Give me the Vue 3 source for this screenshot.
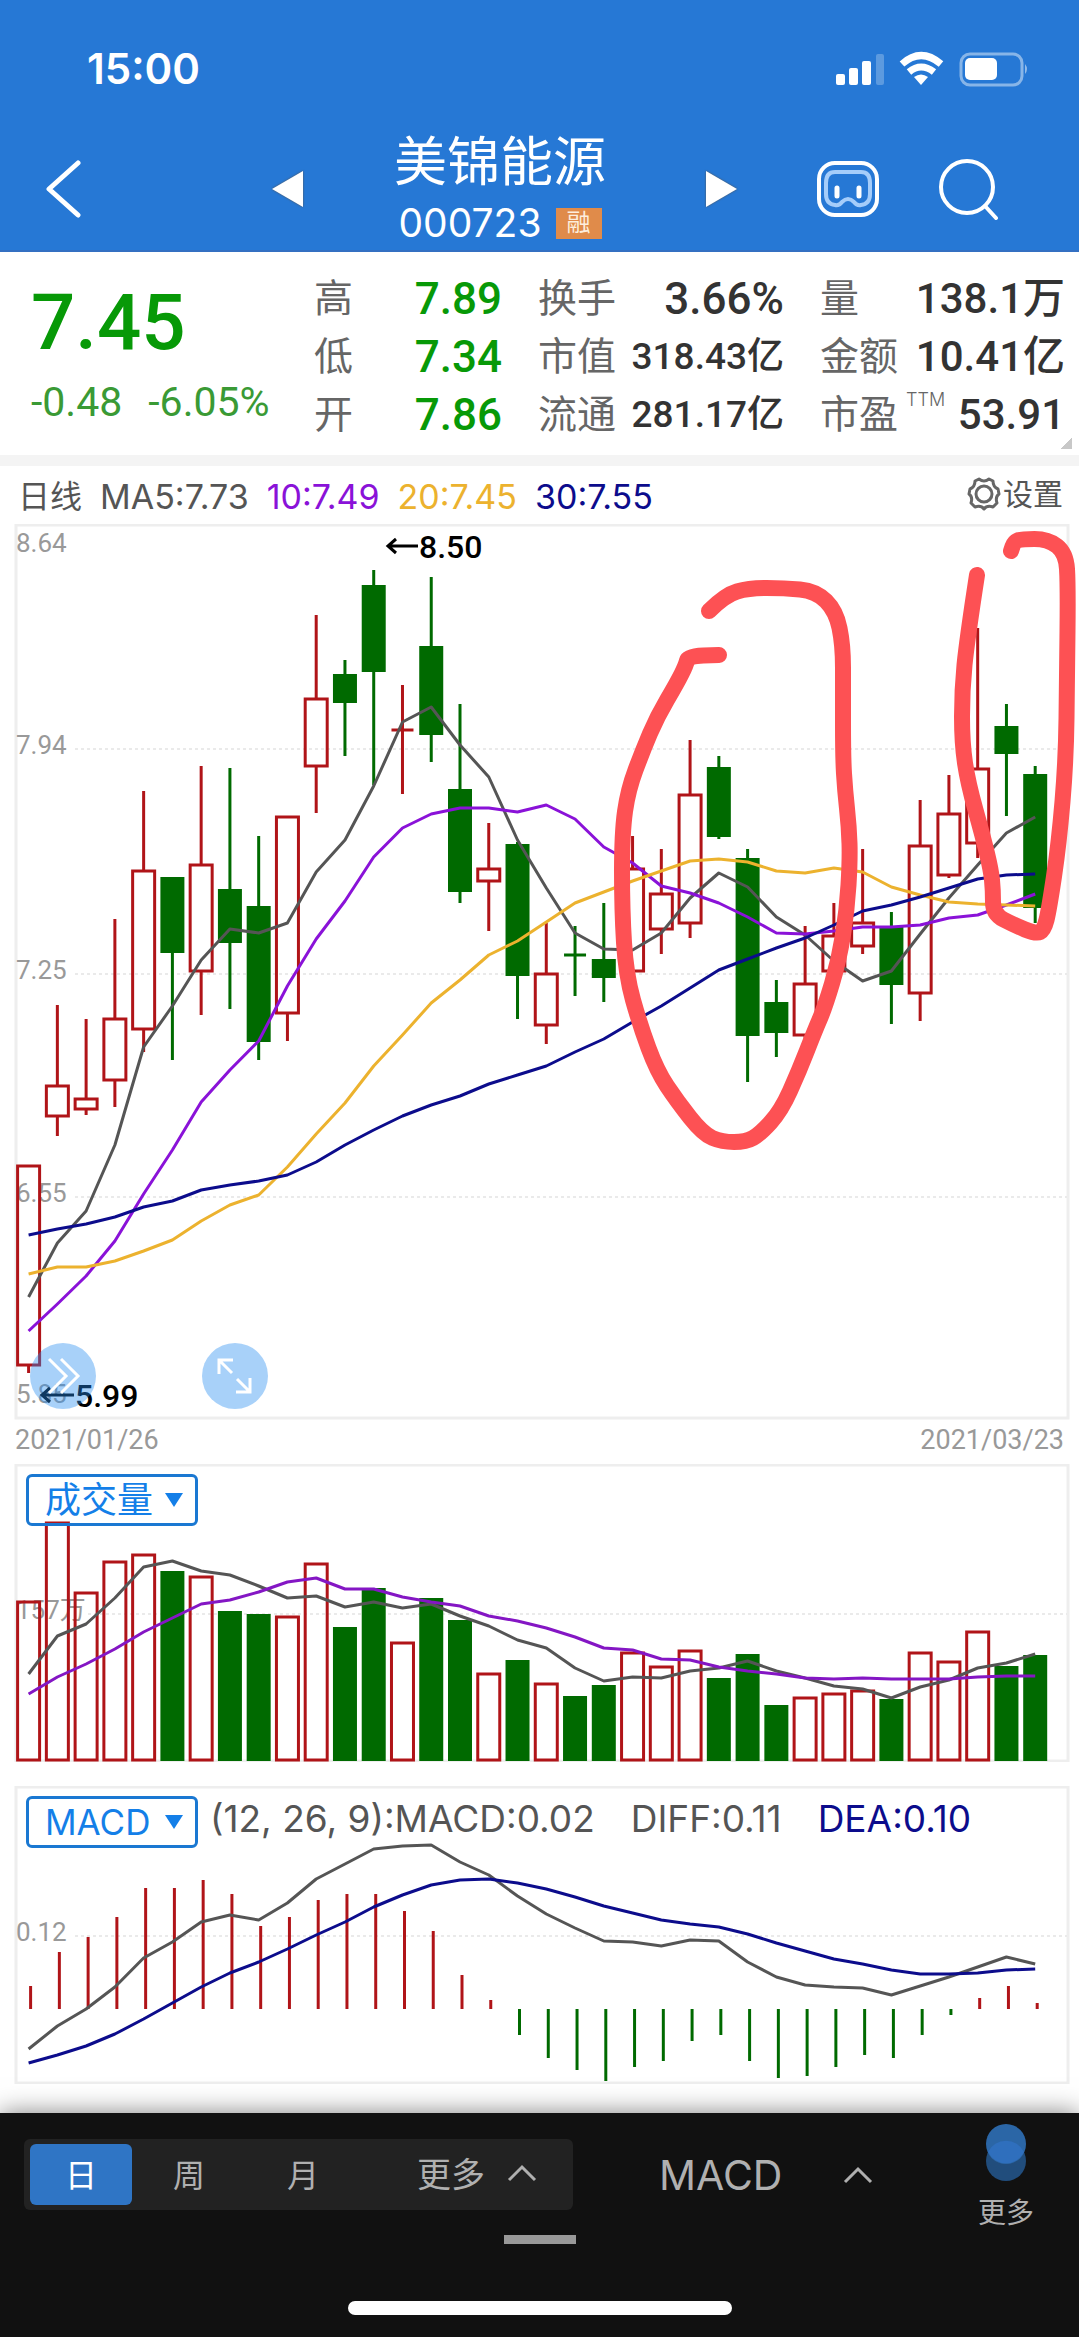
<script setup>
const STEP = 28.76
const xAt = (i) => 28.6 + STEP * i
const toPoints = (ys) => ys.map((y, i) => `${xAt(i).toFixed(1)},${y}`).join(' ')

// kind, high, body top, body bottom, low
const candles = [
  ['r', 1166, 1166, 1365, 1373], ['r', 1005, 1086, 1116, 1136], ['r', 1019, 1099, 1109, 1115],
  ['r', 919, 1019, 1080, 1107], ['r', 791, 871, 1029, 1052], ['g', 877, 877, 953, 1060],
  ['r', 766, 865, 971, 1015], ['g', 768, 889, 943, 1009], ['g', 836, 906, 1042, 1060],
  ['r', 817, 817, 1013, 1041], ['r', 615, 699, 766, 813], ['g', 660, 674, 703, 756],
  ['g', 570, 585, 672, 785], ['r', 685, 730, 730, 794], ['g', 577, 646, 735, 762],
  ['g', 704, 789, 892, 903], ['r', 823, 869, 881, 931], ['g', 842, 844, 976, 1019],
  ['r', 923, 974, 1025, 1044], ['g', 926, 955, 955, 996], ['g', 903, 959, 978, 1002],
  ['r', 836, 869, 971, 971], ['r', 849, 894, 929, 954], ['r', 740, 795, 923, 938],
  ['g', 756, 767, 837, 839], ['g', 849, 858, 1036, 1082], ['g', 980, 1002, 1033, 1057],
  ['r', 926, 984, 1035, 1043], ['r', 903, 936, 971, 971], ['r', 849, 923, 946, 954],
  ['g', 912, 926, 985, 1024], ['r', 800, 846, 993, 1021], ['r', 775, 814, 875, 878],
  ['r', 628, 769, 843, 858], ['g', 704, 726, 754, 816], ['g', 766, 774, 908, 923],
].map(([kind, high, top, bottom, low], i) => ({ kind, high, top, bottom, low, x: xAt(i) }))

const averages = [
  { color: '#555555', ys: [1297, 1243, 1211, 1145, 1047, 1006, 960, 929, 933, 923, 872, 840, 786, 722, 707, 745, 777, 840, 888, 933, 949, 950, 933, 898, 873, 887, 917, 935, 961, 981, 971, 934, 898, 865, 833, 817] },
  { color: '#8a12d8', ys: [1331, 1304, 1276, 1241, 1194, 1150, 1102, 1070, 1041, 986, 939, 901, 857, 828, 814, 808, 808, 812, 805, 819, 847, 863, 886, 893, 903, 917, 933, 934, 931, 927, 927, 925, 918, 915, 905, 894] },
  { color: '#ecb22e', ys: [1274, 1267, 1267, 1261, 1251, 1240, 1221, 1205, 1195, 1167, 1134, 1103, 1066, 1035, 1003, 980, 955, 941, 922, 903, 892, 881, 871, 861, 859, 862, 871, 873, 868, 872, 887, 895, 902, 904, 905, 906] },
  { color: '#0c0c8c', ys: [1235, 1229, 1224, 1217, 1207, 1201, 1190, 1185, 1181, 1175, 1162, 1145, 1130, 1116, 1105, 1096, 1084, 1075, 1066, 1052, 1039, 1022, 1006, 988, 970, 959, 948, 938, 925, 911, 905, 897, 888, 879, 875, 874] },
]

const volumeTops = [1602, 1523, 1593, 1562, 1555, 1571, 1577, 1611, 1614, 1617, 1564, 1627, 1588, 1643, 1598, 1620, 1674, 1660, 1684, 1696, 1685, 1653, 1667, 1651, 1678, 1654, 1705, 1698, 1694, 1691, 1699, 1653, 1662, 1632, 1666, 1655]
const volumes = volumeTops.map((top, i) => ({ top, x: xAt(i), kind: candles[i].kind }))
const volumeLines = [
  { color: '#555555', ys: [1674, 1636, 1624, 1598, 1567, 1561, 1571, 1575, 1586, 1598, 1596, 1607, 1602, 1608, 1604, 1616, 1626, 1640, 1648, 1668, 1681, 1677, 1678, 1671, 1668, 1661, 1671, 1678, 1686, 1689, 1698, 1687, 1680, 1668, 1663, 1654] },
  { color: '#8416c4', ys: [1694, 1677, 1664, 1649, 1632, 1618, 1604, 1600, 1592, 1582, 1578, 1589, 1589, 1597, 1602, 1606, 1616, 1621, 1628, 1637, 1648, 1650, 1659, 1660, 1667, 1671, 1674, 1678, 1679, 1678, 1679, 1679, 1679, 1677, 1676, 1676] },
]

const MACD_ZERO = 2009
const macdEnds = [1986, 1952, 1937, 1917, 1888, 1888, 1880, 1894, 1926, 1917, 1900, 1894, 1894, 1911, 1931, 1975, 2000, 2035, 2058, 2070, 2081, 2067, 2061, 2041, 2035, 2061, 2078, 2076, 2067, 2055, 2058, 2035, 2015, 1998, 1986, 2003]
const macdBars = macdEnds.map((end, i) => ({ end, x: xAt(i) + 2, kind: end < MACD_ZERO ? 'r' : 'g' }))
const macdLines = [
  { color: '#555555', ys: [2049, 2026, 2009, 1987, 1958, 1942, 1922, 1915, 1920, 1903, 1879, 1864, 1849, 1846, 1845, 1862, 1875, 1896, 1914, 1928, 1941, 1942, 1946, 1940, 1941, 1962, 1977, 1985, 1987, 1988, 1995, 1986, 1977, 1967, 1957, 1964] },
  { color: '#0c0c8c', ys: [2063, 2055, 2046, 2034, 2019, 2003, 1987, 1973, 1962, 1949, 1935, 1922, 1907, 1895, 1885, 1880, 1879, 1883, 1889, 1897, 1906, 1913, 1920, 1924, 1927, 1934, 1943, 1951, 1959, 1964, 1970, 1974, 1974, 1973, 1970, 1969] },
]

// Freehand marks: the pen path runs through the midpoints of the sampled positions.
const penPath = (pts) => {
  let d = `M${pts[0][0]} ${pts[0][1]}`
  for (let i = 1; i < pts.length - 1; i++) {
    const mx = (pts[i][0] + pts[i + 1][0]) / 2
    const my = (pts[i][1] + pts[i + 1][1]) / 2
    d += ` Q${pts[i][0]} ${pts[i][1]} ${mx} ${my}`
  }
  const last = pts[pts.length - 1]
  return `${d} L${last[0]} ${last[1]}`
}
const marks = [
  penPath([[709, 611], [725, 595], [749, 588], [784, 588], [816, 591], [836, 611], [843, 645], [843, 690], [843, 757], [845, 790], [849, 827], [850, 860], [847, 910], [839, 960], [825, 1007], [815, 1030], [799, 1071], [781, 1111], [760, 1134], [746, 1142], [722, 1142], [703, 1134], [677, 1101], [657, 1071], [640, 1025], [626, 975], [622, 910], [622, 833], [628, 790], [643, 750], [657, 717], [677, 683], [686, 665], [688, 656], [719, 655]]),
  penPath([[977, 575], [967, 640], [962, 690], [962, 743], [968, 783], [983, 837], [991, 870], [993, 890], [993, 914], [1014, 925], [1036, 934], [1044, 930], [1049, 910], [1059, 843], [1066, 760], [1067, 677], [1068, 585], [1066, 553], [1048, 539], [1021, 539], [1014, 542], [1011, 551]]),
]

const priceLabels = [
  { y: 552, text: '8.64' }, { y: 754, text: '7.94' }, { y: 979, text: '7.25' },
  { y: 1202, text: '6.55' }, { y: 1403, text: '5.85' },
]
const legend = [
  { text: 'MA5:7.73', cls: 'gray' }, { text: '10:7.49', cls: 'purple' },
  { text: '20:7.45', cls: 'amber' }, { text: '30:7.55', cls: 'navy' },
]
const stats = [
  { cls: 'range', rows: [{ k: '高', v: '7.89' }, { k: '低', v: '7.34' }, { k: '开', v: '7.86' }] },
  { cls: 'caps', rows: [{ k: '换手', v: '3.66%' }, { k: '市值', v: '318.43亿', small: true }, { k: '流通', v: '281.17亿', small: true }] },
  { cls: 'flow', rows: [{ k: '量', v: '138.1万' }, { k: '金额', v: '10.41亿' }, { k: '市盈', sup: 'TTM', v: '53.91' }] },
]
</script>

<template>
  <div class="page">
    <header class="top">
      <div class="status">
        <span class="clock">15:00</span>
        <svg class="status-icons" viewBox="836 50 194 36" aria-hidden="true">
          <g fill="#fff">
            <rect x="836" y="73" width="9" height="11" rx="2" />
            <rect x="849" y="67" width="9" height="17" rx="2" />
            <rect x="862" y="60" width="9" height="24" rx="2" />
            <rect x="876" y="53" width="8" height="31" rx="2" opacity=".25" />
            <path d="M921 84l-7-8q7-5 14 0z" />
          </g>
          <g fill="none" stroke="#fff" stroke-width="7">
            <path d="M902 63Q921 46 941 63" />
            <path d="M909 71Q921 61 934 71" />
          </g>
          <rect x="961" y="53" width="61" height="31" rx="9" fill="none" stroke="#fff" stroke-opacity=".45" stroke-width="3" />
          <rect x="965" y="57" width="32" height="22" rx="5" fill="#fff" />
          <path d="M1025 63q4 5 0 10z" fill="#fff" opacity=".5" />
        </svg>
      </div>
      <div class="nav">
        <button class="icon-btn" aria-label="返回">
          <svg width="36" height="60" viewBox="0 0 36 60"><path d="M33 4L4 30L33 56" fill="none" stroke="#fff" stroke-width="5" stroke-linecap="round" stroke-linejoin="round" /></svg>
        </button>
        <div class="switcher">
          <button class="icon-btn" aria-label="上一只">
            <svg class="arrow" width="32" height="36" viewBox="0 0 32 36"><path d="M31 0V36L0 18z" fill="#fff" /></svg>
          </button>
          <div class="title">
            <h1>美锦能源</h1>
            <p class="code">000723 <span class="badge">融</span></p>
          </div>
          <button class="icon-btn" aria-label="下一只">
            <svg class="arrow" width="32" height="36" viewBox="0 0 32 36"><path d="M1 0V36L32 18z" fill="#fff" /></svg>
          </button>
        </div>
        <button class="icon-btn" aria-label="智能助手">
          <svg width="62" height="58" viewBox="0 0 62 58" fill="none">
            <rect x="2" y="3" width="58" height="52" rx="16" stroke="#fff" stroke-width="4" />
            <path d="M18 12H44Q53 12 53 23V34Q53 44 44 45Q40 46 37 42Q34 39 31 39Q28 39 25 42Q22 46 18 45Q9 44 9 34V23Q9 12 18 12z" stroke="#a5cdfa" stroke-width="4" />
            <path d="M20 28V36M42 28V36" stroke="#fff" stroke-width="5" stroke-linecap="round" />
          </svg>
        </button>
        <button class="icon-btn search" aria-label="搜索">
          <svg width="62" height="62" viewBox="0 0 62 62" fill="none" stroke="#fff" stroke-width="4" stroke-linecap="round"><circle cx="29" cy="29" r="26" /><path d="M47 48L58 60" /></svg>
        </button>
      </div>
    </header>

    <section class="quote">
      <div class="price">
        <strong>7.45</strong>
        <p><span>-0.48</span><span>-6.05%</span></p>
      </div>
      <dl v-for="col in stats" :key="col.cls" :class="col.cls">
        <div v-for="row in col.rows" :key="row.k">
          <dt>{{ row.k }}<sup v-if="row.sup">{{ row.sup }}</sup></dt>
          <dd :class="{ small: row.small }">{{ row.v }}</dd>
        </div>
      </dl>
      <i class="corner"></i>
    </section>

    <main>
      <div class="legend">
        <span class="period">日线</span>
        <span v-for="item in legend" :key="item.text" :class="item.cls">{{ item.text }}</span>
        <button class="settings">
          <svg width="34" height="34" viewBox="0 0 34 34" fill="none" stroke="#666" stroke-width="3">
            <circle cx="17" cy="17" r="8" />
            <path d="M12 2Q17 6 22 2L26 4Q26 10 31 12L32 17Q28 20 30 26L26 30Q20 28 17 32Q14 28 8 30L4 26Q6 20 2 17L3 12Q8 10 8 4z" stroke-linejoin="round" />
          </svg>设置
        </button>
      </div>

      <div class="panel">
        <svg viewBox="0 524 1079 896" role="img" aria-label="日线K线图">
          <rect class="frame" x="16" y="525" width="1052" height="893" />
          <g class="grid"><path d="M75 749H1067M75 974H1067M75 1197H1067" /></g>
          <g class="axis"><text v-for="l in priceLabels" :key="l.y" x="16" :y="l.y">{{ l.text }}</text></g>
          <g v-for="c in candles" :key="c.x" :class="c.kind">
            <path :d="`M${c.x} ${c.high}V${c.top}M${c.x} ${c.bottom}V${c.low}`" />
            <path v-if="c.top === c.bottom" :d="`M${c.x - 11} ${c.top}h22`" />
            <rect v-else-if="c.kind === 'r'" :x="c.x - 11" :y="c.top" width="22" :height="c.bottom - c.top" />
            <rect v-else class="solid" :x="c.x - 12" :y="c.top" width="24" :height="c.bottom - c.top" />
          </g>
          <polyline v-for="a in averages" :key="a.color" class="line" :points="toPoints(a.ys)" :stroke="a.color" />
          <g class="note">
            <path d="M418 546H388M396 539L388 546L396 553" />
            <text x="419" y="558">8.50</text>
            <path d="M74 1395H42M50 1388L42 1395L50 1402" />
            <text x="75" y="1407">5.99</text>
          </g>
          <path v-for="(d, i) in marks" :key="i" class="mark" :d="d" />
        </svg>
        <div class="chart-tools">
          <button class="round" aria-label="快进">
            <svg width="66" height="66" viewBox="0 0 66 66"><path d="M19 16L36 33L19 50M31 16L48 33L31 50" /></svg>
          </button>
          <button class="round" aria-label="放大">
            <svg width="66" height="66" viewBox="0 0 66 66"><path d="M17 31V17H31M17 17L30 30M35 36L48 49M48 35V49H34" /></svg>
          </button>
        </div>
      </div>
      <div class="dates"><time>2021/01/26</time><time>2021/03/23</time></div>

      <div class="panel volume">
        <div class="panel-head"><button class="picker" aria-haspopup="listbox">成交量<i></i></button></div>
        <svg viewBox="0 1464 1079 298" role="img" aria-label="成交量图">
          <rect class="frame" x="16" y="1465" width="1052" height="296" />
          <g class="grid"><path d="M88 1614H1067" /></g>
          <g class="axis"><text x="16" y="1619">157万</text></g>
          <g v-for="v in volumes" :key="v.x" :class="v.kind">
            <rect v-if="v.kind === 'r'" :x="v.x - 11" :y="v.top" width="22" :height="1760 - v.top" />
            <rect v-else class="solid" :x="v.x - 12" :y="v.top" width="24" :height="1761 - v.top" />
          </g>
          <polyline v-for="a in volumeLines" :key="a.color" class="line" :points="toPoints(a.ys)" :stroke="a.color" />
        </svg>
      </div>

      <div class="panel macd">
        <div class="panel-head">
          <button class="picker" aria-haspopup="listbox">MACD<i></i></button>
          <span class="gray">(12, 26, 9):MACD:0.02</span>
          <span class="gray">DIFF:0.11</span>
          <span class="navy">DEA:0.10</span>
        </div>
        <svg viewBox="0 1786 1079 298" role="img" aria-label="MACD图">
          <rect class="frame" x="16" y="1787" width="1052" height="296" />
          <g class="grid"><path d="M75 1936H1067" /></g>
          <g class="axis"><text x="16" y="1941">0.12</text></g>
          <g v-for="b in macdBars" :key="b.x" :class="b.kind"><path :d="`M${b.x} ${MACD_ZERO}V${b.end}`" /></g>
          <polyline v-for="a in macdLines" :key="a.color" class="line" :points="toPoints(a.ys)" :stroke="a.color" />
        </svg>
      </div>
    </main>

    <footer>
      <div class="bar">
        <div class="tabs">
          <button class="active">日</button>
          <button>周</button>
          <button>月</button>
          <button class="more">更多<svg width="30" height="18" viewBox="0 0 30 18"><path d="M2 16L15 3L28 16" /></svg></button>
        </div>
        <button class="indicator">MACD<svg width="30" height="18" viewBox="0 0 30 18"><path d="M2 16L15 3L28 16" /></svg></button>
        <button class="extra">
          <svg width="42" height="58" viewBox="0 0 42 58"><circle cx="21" cy="37" r="20" fill="#214d7c" /><circle cx="21" cy="20" r="20" fill="#2b66a6" /><path d="M3 28A20 20 0 0 1 39 28A20 20 0 0 1 3 28z" fill="#2f6fbd" /></svg>
          更多
        </button>
      </div>
      <div class="grip"></div>
      <div class="home"></div>
    </footer>
  </div>
</template>

<style>
body { margin: 0; background: #fff; }
</style>

<style scoped>
.page { font-family: Inter, "Noto Sans CJK SC", sans-serif; color: #555; background: #fff; }
.page * { box-sizing: border-box; }
button { background: none; border: 0; padding: 0; margin: 0; font: inherit; color: inherit; display: flex; align-items: center; }
svg { display: block; flex: none; }
h1, p, dl, dd { margin: 0; font-weight: 400; }

.top { background: #2678d5; color: #fff; height: 252px; border-bottom: 2px solid #3470c2; }
.status { display: flex; justify-content: space-between; align-items: center; height: 126px; padding: 12px 49px 0 87px; }
.clock { font-size: 42px; font-weight: 600; line-height: 48px; }
.status-icons { width: 194px; height: 36px; }
.nav { display: flex; align-items: center; padding: 2px 79px 0 45px; height: 124px; }
.switcher { flex: 1; display: flex; justify-content: space-between; align-items: center; margin: 0 80px 0 191px; }
.arrow { filter: drop-shadow(0 0 1px #555); }
.title { text-align: center; padding: 0 9px 6px 0; }
.title h1 { font-size: 53px; line-height: 74px; font-weight: 400; }
.code { display: flex; align-items: center; justify-content: center; gap: 14px; font-size: 39px; line-height: 48px; font-weight: 400; }
.badge { width: 46px; height: 31px; background: #e08b4a; color: #fdeedd; font-size: 24px; line-height: 29px; }
.search { margin-left: 59px; }

.quote { position: relative; display: flex; gap: 36px; height: 214px; padding: 18px 14px 0 31px; border-bottom: 11px solid #f4f4f4; font-family: Roboto, "Noto Sans CJK SC", sans-serif; }
.price { flex: 1; color: #079907; }
.price strong { display: block; font-size: 78px; line-height: 106px; font-weight: 500; }
.price p { display: flex; gap: 26px; font-size: 41px; line-height: 52px; color: #3a9a35; white-space: nowrap; }
dl > div { display: flex; justify-content: space-between; align-items: center; height: 58px; white-space: nowrap; }
dt { font-size: 39px; line-height: 58px; color: #666; font-weight: 400; }
dd { font-size: 44px; line-height: 58px; font-weight: 500; color: #333; }
dd.small { font-size: 37px; }
.range { width: 188px; }
.range dd { color: #079907; }
.caps { width: 246px; }
.flow { width: 245px; }
.flow dd { font-size: 42px; }
sup { font-size: 18px; line-height: 18px; margin-left: 8px; vertical-align: 22px; font-family: Inter, sans-serif; font-weight: 300; }
.corner { position: absolute; right: 7px; bottom: 6px; width: 12px; height: 12px; background: linear-gradient(135deg, transparent 50%, #c8c8c8 50%); }

.legend { display: flex; align-items: center; gap: 18px; height: 58px; padding: 4px 16px 0 18px; font-size: 34px; line-height: 40px; }
.period { font-size: 32px; }
.settings { margin-left: auto; gap: 2px; font-size: 30px; color: #555; padding-bottom: 6px; }
.gray { color: #555; }
.purple { color: #8a12d8; }
.amber { color: #ecb22e; }
.navy { color: #0c0c8c; }

.panel { position: relative; }
.panel > svg { width: 100%; height: auto; }
.frame { fill: none; stroke: #eee; stroke-width: 3; }
.grid path { stroke: #eaeaea; stroke-width: 2; stroke-dasharray: 3 3; }
.axis text { font: 26px Roboto, "Noto Sans CJK SC", sans-serif; fill: #999; }
.r { stroke: #b01418; stroke-width: 3; fill: none; }
.g { stroke: #006a00; stroke-width: 3; fill: none; }
.solid { fill: #006a00; stroke: none; }
.line { fill: none; stroke-width: 3; stroke-linejoin: round; }
.note path { fill: none; stroke: #000; stroke-width: 3; }
.note text { font: 500 32px Roboto, sans-serif; fill: #000; }
.mark { fill: none; stroke: #fd5154; stroke-width: 16; stroke-linecap: round; stroke-linejoin: round; }
.chart-tools { position: absolute; left: 30px; bottom: 11px; display: flex; gap: 106px; }
.round { width: 66px; height: 66px; border-radius: 50%; background: rgba(37, 140, 240, .4); }
.round path { fill: none; stroke: #fff; stroke-width: 3; }
.dates { display: flex; justify-content: space-between; height: 44px; padding: 0 15px; font: 27px/40px Roboto, sans-serif; color: #999; }
.panel-head { position: absolute; left: 26px; top: 10px; display: flex; align-items: center; font-size: 37px; line-height: 46px; white-space: nowrap; }
.panel-head span { padding-bottom: 6px; }
.panel-head span + span { margin-left: 36px; }
.picker { width: 172px; height: 52px; border: 3px solid #1a78d2; border-radius: 6px; padding: 0 12px 0 16px; justify-content: space-between; color: #147fe8; margin-right: 12px; font-size: 36px; }
.macd .picker { font-size: 35px; }
.picker i { border: 9px solid transparent; border-top: 14px solid #147fe8; border-bottom: 0; }
.macd { margin: 24px 0 29px; }

footer { position: relative; background: #111; box-shadow: 0 0 24px rgba(0, 0, 0, .5); height: 224px; color: #b0b0b0; }
.bar { display: flex; align-items: flex-start; padding: 26px 45px 0 24px; height: 122px; font-size: 32px; }
.tabs { display: flex; width: 549px; height: 71px; padding: 5px 36px 5px 6px; background: #222; border-radius: 6px; }
.tabs button { justify-content: center; width: 114px; padding-bottom: 4px; }
.tabs .active { width: 102px; background: #2f75c5; color: #fff; border-radius: 6px; }
.tabs .more { margin-left: auto; width: auto; gap: 22px; font-size: 34px; }
footer path { fill: none; }
.tabs path, .indicator path { stroke: #b0b0b0; stroke-width: 3; }
.extra path { fill: #2f6fbd; }
.indicator { margin-left: 86px; height: 71px; gap: 61px; font-size: 41px; }
.extra { flex-direction: column; margin-left: auto; margin-top: -15px; font-size: 28px; line-height: 40px; gap: 11px; }
.grip { width: 72px; height: 9px; margin: 0 auto; background: #999; }
.home { width: 384px; height: 14px; margin: 57px auto 0; background: #fff; border-radius: 7px; }
</style>
